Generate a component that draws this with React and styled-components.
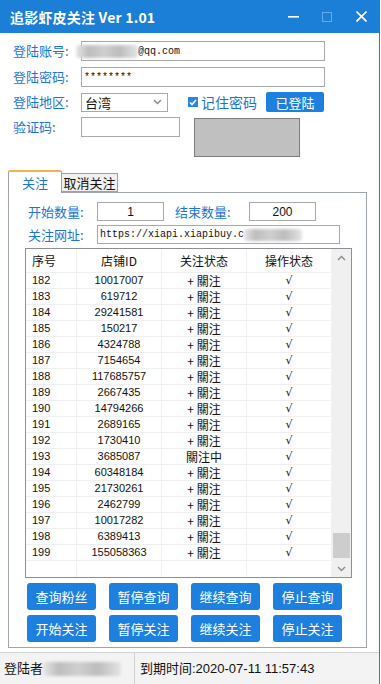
import React from "react";
import styled, { createGlobalStyle } from "styled-components";

const BLUE = "#1b7fd7";
const LABEL = "#1b74d6";
const CJK = `"Noto Sans CJK SC", "Liberation Sans", sans-serif`;

const rows = [
  ["182", "10017007"],
  ["183", "619712"],
  ["184", "29241581"],
  ["185", "150217"],
  ["186", "4324788"],
  ["187", "7154654"],
  ["188", "117685757"],
  ["189", "2667435"],
  ["190", "14794266"],
  ["191", "2689165"],
  ["192", "1730410"],
  ["193", "3685087", "關注中"],
  ["194", "60348184"],
  ["195", "21730261"],
  ["196", "2462799"],
  ["197", "10017282"],
  ["198", "6389413"],
  ["199", "155058363"],
];

const buttons = [
  "查询粉丝",
  "暂停查询",
  "继续查询",
  "停止查询",
  "开始关注",
  "暂停关注",
  "继续关注",
  "停止关注",
];

const GlobalStyle = createGlobalStyle`
  html, body { margin: 0; padding: 0; background: #fff; }
  body { font-family: ${CJK}; }
  * { box-sizing: border-box; }
`;

const Window = styled.div`
  width: 380px;
  height: 684px;
  display: flex;
  flex-direction: column;
  border-right: 1px solid ${BLUE};
  background: #fff;
`;

const TitleBar = styled.div`
  height: 33px;
  flex: none;
  background: ${BLUE};
  display: flex;
  align-items: center;
  padding-left: 10px;
  padding-right: 1px;
`;

const Title = styled.div`
  color: #fff;
  font: bold 14px/1 ${CJK};
  letter-spacing: 0.2px;
`;

const Controls = styled.div`
  margin-left: auto;
  display: flex;
  height: 100%;
`;

const Control = styled.div`
  width: 34px;
  height: 100%;
  display: flex;
  align-items: center;
  justify-content: center;
`;

const Main = styled.div`
  flex: 1;
  display: flex;
  flex-direction: column;
  padding: 8px 12px 0 8px;
`;

const Form = styled.div`
  padding-left: 5px;
  display: flex;
  flex-direction: column;
`;

const Row = styled.div`
  display: flex;
  align-items: ${(p) => (p.top ? "flex-start" : "center")};
  height: ${(p) => p.h || 20}px;
  margin-top: ${(p) => p.gap || 0}px;
`;

const Label = styled.div`
  width: ${(p) => p.w || 68}px;
  flex: none;
  color: ${LABEL};
  font: 13px/20px ${CJK};
  margin-left: ${(p) => p.ml || 0}px;
`;

const TextBox = styled.div`
  width: ${(p) => p.w}px;
  height: ${(p) => p.h || 20}px;
  flex: none;
  border: 1px solid #a9a9a9;
  background: #fff;
  display: flex;
  align-items: center;
  justify-content: ${(p) => (p.center ? "center" : "flex-start")};
  padding-left: ${(p) => (p.center ? 0 : 2)}px;
  font: ${(p) => (p.center ? `12px "Liberation Sans", sans-serif` : `10px "Liberation Mono", monospace`)};
  color: #111;
  white-space: nowrap;
  overflow: visible;
`;

const Blur = styled.span`
  display: inline-block;
  width: ${(p) => p.w}px;
  height: ${(p) => p.h || 13}px;
  margin-left: ${(p) => p.ml || 0}px;
  background: linear-gradient(90deg, #e6e6e6, #bdbdbd 20%, #cfcfcf 45%, #bcbcbc 70%, #e4e4e4);
  filter: blur(1.5px);
  border-radius: 3px;
`;

const Select = styled.div`
  width: 87px;
  height: 19px;
  border: 1px solid #a9a9a9;
  display: flex;
  align-items: center;
  padding: 0 5px 0 3px;
  font: 13px/1 ${CJK};
  color: #111;
  justify-content: space-between;
`;

const Check = styled.div`
  margin-left: 20px;
  width: 10px;
  height: 10px;
  background: #2a86e6;
  display: flex;
  align-items: center;
  justify-content: center;
`;

const CheckText = styled.div`
  margin-left: 3px;
  color: ${LABEL};
  font: 14px/20px ${CJK};
`;

const SmallButton = styled.div`
  margin-left: 9px;
  width: 58px;
  height: 20px;
  background: #1e80de;
  color: #fff;
  border-radius: 2px;
  display: flex;
  align-items: center;
  justify-content: center;
  font: 13px/1 ${CJK};
`;

const Captcha = styled.div`
  margin-left: 14px;
  margin-top: 1px;
  width: 106px;
  height: 39px;
  background: #c0c0c0;
  border: 1px solid #7d7d7d;
`;

const TabStrip = styled.div`
  margin-top: 13px;
  display: flex;
  align-items: flex-end;
  height: 22px;
  position: relative;
  z-index: 1;
`;

const Tab = styled.div`
  height: ${(p) => (p.active ? 23 : 19)}px;
  width: ${(p) => p.w}px;
  background: ${(p) => (p.active ? "#fff" : "#f0f0f0")};
  border: 1px solid #a0a0a0;
  border-top: ${(p) => (p.active ? "2px solid #f2b24f" : "1px solid #a0a0a0")};
  border-bottom: ${(p) => (p.active ? "none" : "1px solid #a0a0a0")};
  border-left: ${(p) => (p.active ? "1px solid #a0a0a0" : "none")};
  border-radius: ${(p) => (p.active ? "2px 2px 0 0" : "0")};
  margin-bottom: ${(p) => (p.active ? -1 : 0)}px;
  color: ${(p) => (p.active ? LABEL : "#111")};
  font: 13px/1 ${CJK};
  display: flex;
  align-items: center;
  justify-content: center;
`;

const Panel = styled.div`
  height: 456px;
  border: 1px solid #a0a6ad;
  background: #fff;
  padding: 9px 0 0 16px;
`;

const FieldRow = styled.div`
  display: flex;
  align-items: center;
  height: 19px;
  padding-left: 3px;
  margin-top: ${(p) => p.gap || 0}px;
`;

const Table = styled.div`
  margin-top: 4px;
  width: 327px;
  height: 330px;
  border: 1px solid #8c9096;
  display: flex;
`;

const List = styled.div`
  flex: 1;
  display: flex;
  flex-direction: column;
`;

const GridRow = styled.div`
  display: grid;
  grid-template-columns: 51px 85px 85px 85px;
  height: ${(p) => p.h}px;
  flex: ${(p) => (p.fill ? 1 : "none")};
  border-bottom: ${(p) => (p.fill ? "none" : "1px solid #f0f0f0")};
`;

const Cell = styled.div`
  border-right: 1px solid #f0f0f0;
  display: flex;
  align-items: center;
  justify-content: ${(p) => (p.left ? "flex-start" : "center")};
  padding-left: ${(p) => (p.left ? 6 : 0)}px;
  font: ${(p) =>
    p.head ? `12px/1 ${CJK}` : p.cjk ? `12px/1 ${CJK}` : `11px/1 "Liberation Sans", sans-serif`};
  color: #111;
  white-space: nowrap;
`;

const Tick = styled.span`
  font: italic 11px/1 "DejaVu Sans", sans-serif;
  color: #222;
`;

const ScrollBar = styled.div`
  width: 19px;
  background: #f0f0f0;
  display: flex;
  flex-direction: column;
`;

const Arrow = styled.div`
  height: 17px;
  display: flex;
  align-items: center;
  justify-content: center;
`;

const Track = styled.div`
  flex: 1;
  display: flex;
  flex-direction: column;
  justify-content: flex-end;
  align-items: center;
`;

const Thumb = styled.div`
  width: 17px;
  height: 25px;
  margin-bottom: 2px;
  background: #cdcdcd;
`;

const ButtonGrid = styled.div`
  margin-top: 5px;
  margin-left: 2px;
  display: grid;
  grid-template-columns: repeat(4, 69px);
  column-gap: 13px;
  row-gap: 5px;
`;

const ActionButton = styled.div`
  height: 27px;
  background: #1e80de;
  border-radius: 3px;
  color: #fff;
  font: 13px/1 ${CJK};
  display: flex;
  align-items: center;
  justify-content: center;
`;

const StatusBar = styled.div`
  height: 32px;
  flex: none;
  border-top: 1px solid #d4d4d4;
  background: #f3f3f3;
  display: flex;
`;

const StatusCell = styled.div`
  width: ${(p) => (p.w ? `${p.w}px` : "auto")};
  flex: ${(p) => (p.w ? "none" : 1)};
  border-right: ${(p) => (p.w ? "1px solid #cfcfcf" : "none")};
  padding-left: ${(p) => (p.w ? 4 : 5)}px;
  display: flex;
  align-items: center;
  font: 13px/1 "Liberation Sans", ${CJK};
  color: #111;
`;

const Chevron = ({ up }) => (
  <svg width="9" height="6" viewBox="0 0 9 6">
    <path
      d={up ? "M1 5 L4.5 1.5 L8 5" : "M1 1 L4.5 4.5 L8 1"}
      fill="none"
      stroke="#8a8a8a"
      strokeWidth="1.4"
    />
  </svg>
);

export default function App() {
  return (
    <>
      <GlobalStyle />
      <Window>
        <TitleBar>
          <Title>追影虾皮关注 Ver 1.01</Title>
          <Controls>
            <Control>
              <svg width="11" height="2" viewBox="0 0 11 2">
                <rect width="11" height="1.6" fill="#fff" />
              </svg>
            </Control>
            <Control>
              <svg width="10" height="10" viewBox="0 0 10 10">
                <rect x="0.5" y="0.5" width="9" height="9" fill="none" stroke="rgba(255,255,255,0.35)" />
              </svg>
            </Control>
            <Control>
              <svg width="11" height="11" viewBox="0 0 11 11">
                <path d="M0.5 0.5 L10.5 10.5 M10.5 0.5 L0.5 10.5" stroke="#fff" strokeWidth="1.6" />
              </svg>
            </Control>
          </Controls>
        </TitleBar>

        <Main>
          <Form>
            <Row>
              <Label>登陆账号:</Label>
              <TextBox w={244}>
                <Blur w={62} ml={-8} />
                @qq.com
              </TextBox>
            </Row>
            <Row gap={6}>
              <Label>登陆密码:</Label>
              <TextBox w={244}>********</TextBox>
            </Row>
            <Row gap={5}>
              <Label>登陆地区:</Label>
              <Select>
                台湾
                <Chevron />
              </Select>
              <Check>
                <svg width="8" height="7" viewBox="0 0 8 7">
                  <path d="M1 3.5 L3 5.5 L7 1" fill="none" stroke="#fff" strokeWidth="1.6" />
                </svg>
              </Check>
              <CheckText>记住密码</CheckText>
              <SmallButton>已登陆</SmallButton>
            </Row>
            <Row gap={5} h={40} top>
              <Label>验证码:</Label>
              <TextBox w={99} />
              <Captcha />
            </Row>
          </Form>

          <TabStrip>
            <Tab active w={54}>关注</Tab>
            <Tab w={56}>取消关注</Tab>
          </TabStrip>
          <Panel>
            <FieldRow>
              <Label w={69}>开始数量:</Label>
              <TextBox w={67} h={19} center>1</TextBox>
              <Label w={74} ml={11}>结束数量:</Label>
              <TextBox w={67} h={19} center>200</TextBox>
            </FieldRow>
            <FieldRow gap={4}>
              <Label w={69}>关注网址:</Label>
              <TextBox w={243} h={19}>
                https://xiapi.xiapibuy.c
                <Blur w={58} h={12} />
              </TextBox>
            </FieldRow>

            <Table>
              <List>
                <GridRow h={24}>
                  <Cell head left>序号</Cell>
                  <Cell head>店铺ID</Cell>
                  <Cell head>关注状态</Cell>
                  <Cell head>操作状态</Cell>
                </GridRow>
                {rows.map(([n, id, st]) => (
                  <GridRow h={16} key={n}>
                    <Cell left>{n}</Cell>
                    <Cell>{id}</Cell>
                    <Cell cjk>{st || "+ 關注"}</Cell>
                    <Cell>
                      <Tick>√</Tick>
                    </Cell>
                  </GridRow>
                ))}
                <GridRow fill>
                  <Cell />
                  <Cell />
                  <Cell />
                  <Cell />
                </GridRow>
              </List>
              <ScrollBar>
                <Arrow>
                  <Chevron up />
                </Arrow>
                <Track>
                  <Thumb />
                </Track>
                <Arrow>
                  <Chevron />
                </Arrow>
              </ScrollBar>
            </Table>

            <ButtonGrid>
              {buttons.map((b) => (
                <ActionButton key={b}>{b}</ActionButton>
              ))}
            </ButtonGrid>
          </Panel>
        </Main>

        <StatusBar>
          <StatusCell w={135}>
            登陆者
            <Blur w={78} h={14} />
          </StatusCell>
          <StatusCell>到期时间:2020-07-11 11:57:43</StatusCell>
        </StatusBar>
      </Window>
    </>
  );
}
